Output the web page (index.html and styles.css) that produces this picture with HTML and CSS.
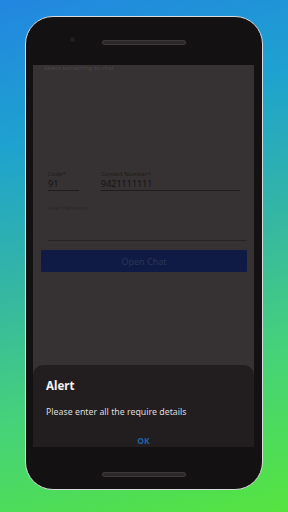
FILE: index.html
```html
<!DOCTYPE html>
<html lang="en">

<head>
    <meta charset="UTF-8">
    <meta name="viewport" content="width=device-width, initial-scale=1.0">
    <title>Chat alert</title>
    <link rel="stylesheet" href="styles.css">
</head>

<body>
    <div class="phone">
        <div class="bezel bezel-top">
            <span class="camera"></span>
            <span class="speaker"></span>
        </div>

        <div class="screen">
            <p class="heading">Select something to chat</p>

            <div class="row">
                <div class="field code">
                    <label>Code*</label>
                    <span class="value">91</span>
                </div>
                <div class="field contact">
                    <label>Contact Number*</label>
                    <span class="value">9421111111</span>
                </div>
            </div>

            <div class="field remarks">
                <label>User Remarks</label>
            </div>

            <button class="open-chat">Open Chat</button>

            <div class="dialog">
                <h2>Alert</h2>
                <p>Please enter all the require details</p>
                <span class="ok">OK</span>
            </div>
        </div>

        <div class="bezel bezel-bottom">
            <span class="speaker"></span>
        </div>
    </div>
</body>

</html>
```

FILE: styles.css
```css
html,
body {
    height: 100%;
}

body {
    margin: 0;
    font-family: "Noto Sans", "DejaVu Sans", sans-serif;
    background: linear-gradient(165deg, #2286e0 0%, #1ea2cf 25%, #35b7a2 50%, #45d27a 72%, #55e43f 100%);
    overflow: hidden;
}

.phone {
    width: 236px;
    height: 472px;
    margin: 16px auto 0;
    display: flex;
    flex-direction: column;
    background: #141112;
    border: 1px solid #d9dcdc;
    border-radius: 28px;
    overflow: hidden;
}

.bezel {
    display: flex;
    align-items: center;
    justify-content: center;
    position: relative;
}

.bezel-top {
    height: 48px;
}

.bezel-bottom {
    height: 42px;
    padding-top: 12px;
    box-sizing: border-box;
}

.speaker {
    width: 82px;
    height: 3px;
    border-radius: 2px;
    background: #2b2728;
    border: 1px solid #3d393a;
}

.bezel-top .speaker {
    margin-top: 3px;
}

.camera {
    position: absolute;
    left: 44px;
    top: 20px;
    width: 5px;
    height: 5px;
    border-radius: 50%;
    background: #221e1f;
}

.screen {
    flex: 1;
    margin: 0 8px 0 7px;
    background: #363233;
    display: flex;
    flex-direction: column;
    padding: 0 7px 0 8px;
    color: #1a1718;
    font-size: 8px;
}

.heading {
    margin: 0;
    line-height: 6px;
    color: #4a4546;
    padding-left: 3px;
    font-size: 6px;
}

.row {
    display: flex;
    gap: 22px;
    margin-top: 99px;
    padding: 0 7px;
}

.field {
    display: flex;
    flex-direction: column;
    border-bottom: 1px solid #1f1c1d;
}

.field label {
    font-size: 6px;
    line-height: 8px;
    color: #1e1b1c;
}

.field .value {
    font-size: 9px;
    line-height: 12px;
    color: #161314;
}

.code {
    width: 31px;
}

.contact {
    flex: 1;
}

.remarks {
    margin: 13px 0 0 7px;
    height: 36px;
    border-bottom-color: #252223;
}

.remarks label {
    color: #29262a;
}

.open-chat {
    margin: 9px 0 0;
    height: 22px;
    border: 0;
    border-radius: 1px;
    background: #0f1b44;
    color: #2a3555;
    font-family: inherit;
    font-size: 9px;
}

.dialog {
    margin: auto -7px 0 -8px;
    height: 82px;
    box-sizing: border-box;
    background: #221e1f;
    border-radius: 10px 10px 0 0;
    padding: 13px 13px 0;
    display: flex;
    flex-direction: column;
    overflow: hidden;
}

.dialog h2 {
    margin: 0;
    font-size: 11.5px;
    line-height: 16px;
    font-weight: bold;
    color: #f4f2f2;
}

.dialog p {
    margin: 13px 0 0;
    font-size: 8.8px;
    line-height: 11px;
    color: #dedbdb;
}

.ok {
    margin-top: 17px;
    align-self: center;
    font-size: 8.5px;
    line-height: 11px;
    font-weight: bold;
    color: #1d62a6;
}
```
